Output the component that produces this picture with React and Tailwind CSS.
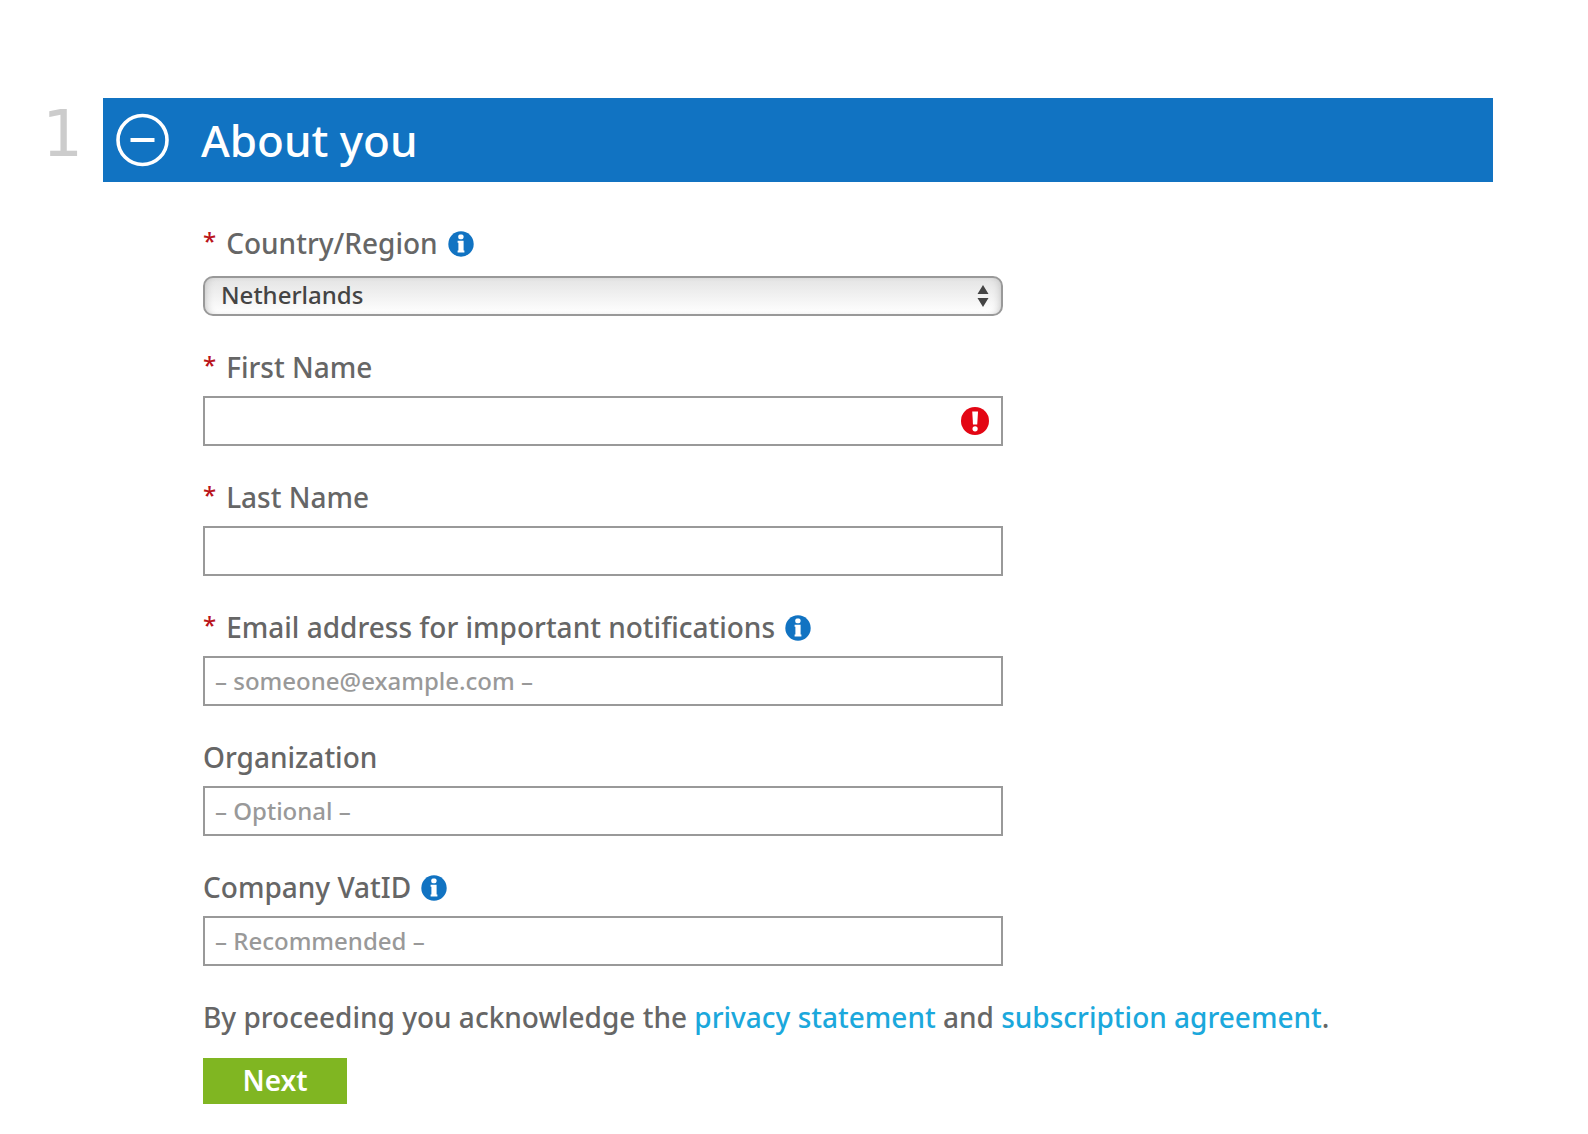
function InfoIcon({ label }) {
  return (
    <button type="button" aria-label={label} className="ml-2.5 shrink-0">
      <svg viewBox="0 0 26 26" className="block size-[26px]" aria-hidden="true">
        <circle cx="13" cy="13" r="12.7" fill="#1173c2" />
        <rect x="10.3" y="3.6" width="5.2" height="4.6" rx="1.6" fill="#fff" />
        <path d="M9.6 9.8h6v9.8h.8v2H9.6v-2h.8v-7.8h-.8z" fill="#fff" />
      </svg>
    </button>
  );
}

function ErrorIcon() {
  return (
    <svg
      viewBox="0 0 28 28"
      className="pointer-events-none absolute top-[11px] right-3.5 size-7"
      role="img"
      aria-label="Required"
    >
      <circle cx="14" cy="14" r="14" fill="#e30614" />
      <path d="M11.2 4.6h5.8l-.8 13h-4.2z" fill="#fff" />
      <circle cx="14.1" cy="21.8" r="2.6" fill="#fff" />
    </svg>
  );
}

function FieldLabel({ id, required, info, children }) {
  return (
    <div className="flex h-10 items-center text-[28px] leading-[38px] font-medium">
      <label htmlFor={id} className="flex h-10 whitespace-nowrap">
        {required && <span className="mr-2.5 text-2xl leading-[34px] text-[#ba141a]">*</span>}
        {children}
      </label>
      {info && <InfoIcon label={info} />}
    </div>
  );
}

function TextField({ id, label, required, info, type = "text", placeholder, error }) {
  return (
    <div className="flex flex-col gap-2">
      <FieldLabel id={id} required={required} info={info}>
        {label}
      </FieldLabel>
      <div className="relative">
        <input
          id={id}
          type={type}
          placeholder={placeholder}
          aria-invalid={error ? true : undefined}
          className="block h-[50px] w-full border-2 border-[#999] bg-white px-2.5 pb-0.5 text-2xl font-medium text-[#444] placeholder:text-[#999] placeholder:opacity-100"
        />
        {error && <ErrorIcon />}
      </div>
    </div>
  );
}

export default function App() {
  return (
    <main className="flex bg-white pt-[98px] pr-[95px] pb-[30px] font-['Noto_Sans',sans-serif] text-[#666]">
      <div className="w-[103px] shrink-0 pr-5 text-right font-['DejaVu_Sans',sans-serif] text-[64px] leading-[72px] text-[#ccc]">
        1
      </div>
      <section className="min-w-0 flex-1">
        <header className="flex h-[84px] items-center bg-[#1173c2] pl-3 text-white">
          <button type="button" aria-label="Collapse section">
            <svg viewBox="0 0 54 54" className="block size-[54px]" fill="none" stroke="#fff" aria-hidden="true">
              <circle cx="27.5" cy="27" r="24.5" strokeWidth="3.6" />
              <path d="M15.5 27h24" strokeWidth="4" />
            </svg>
          </button>
          <h1 className="ml-8 text-[44px] font-medium">About you</h1>
        </header>

        <form className="flex flex-col gap-8 pt-[42px] pl-[100px]" onSubmit={(e) => e.preventDefault()}>
          <div className="flex w-full max-w-[800px] flex-col gap-8">
            <div className="flex flex-col gap-3">
              <FieldLabel id="country" required info="About country or region">
                Country/Region
              </FieldLabel>
              <div className="relative">
                <select
                  id="country"
                  defaultValue="Netherlands"
                  className="block h-10 w-full appearance-none rounded-[10px] border-2 border-[#999] bg-linear-to-b from-[#e4e4e4] to-white px-4 pb-0.5 text-2xl leading-8 font-medium text-[#444] shadow-[inset_6px_0_8px_-6px_#bbb,inset_-6px_0_8px_-6px_#bbb]"
                >
                  <option>Netherlands</option>
                </select>
                <svg
                  viewBox="0 0 12 22"
                  className="pointer-events-none absolute top-[9px] right-3.5 h-[22px] w-3"
                  fill="#444"
                  aria-hidden="true"
                >
                  <path d="M6 0l5.5 9H.5zM6 22L.5 13h11z" />
                </svg>
              </div>
            </div>
            <TextField id="first-name" label="First Name" required error />
            <TextField id="last-name" label="Last Name" required />
            <TextField
              id="email"
              type="email"
              label="Email address for important notifications"
              required
              info="About notification email"
              placeholder="– someone@example.com –"
            />
            <TextField id="organization" label="Organization" placeholder="– Optional –" />
            <TextField id="vat" label="Company VatID" info="About VAT ID" placeholder="– Recommended –" />
          </div>

          <div>
            <p className="pb-0.5 text-[28px] leading-[38px] font-medium">
              By proceeding you acknowledge the{" "}
              <a href="#privacy" className="text-[#1ba8dc]">privacy statement</a> and{" "}
              <a href="#agreement" className="text-[#1ba8dc]">subscription agreement</a>.
            </p>
            <button
              type="submit"
              className="mt-5 block h-[46px] w-36 bg-[#80b622] pb-0.5 text-[28px] leading-[44px] font-semibold text-white"
            >
              Next
            </button>
          </div>
        </form>
      </section>
    </main>
  );
}
